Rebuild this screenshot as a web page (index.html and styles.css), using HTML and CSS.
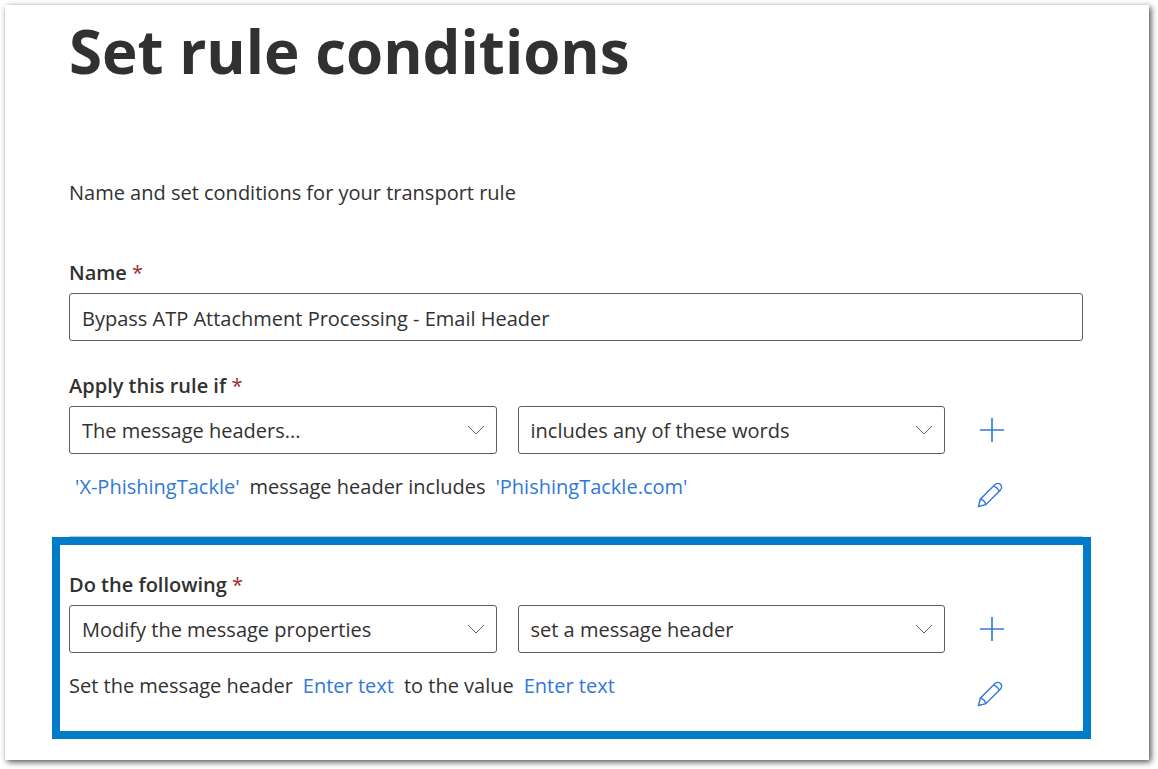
FILE: index.html
```html
<!DOCTYPE html>
<html lang="en">
<head>
    <meta charset="UTF-8">
    <meta name="viewport" content="width=device-width, initial-scale=1.0">
    <title>Set rule conditions</title>
    <link rel="stylesheet" href="styles.css">
</head>
<body>
<main class="panel">
    <form>
        <section class="section">
            <h1>Set rule conditions</h1>
            <p class="intro">Name and set conditions for your transport rule</p>

            <label class="label" for="name">Name <span class="required">*</span></label>
            <input class="field" type="text" id="name" value="Bypass ATP Attachment Processing - Email Header">
        </section>

        <section class="section condition">
            <label class="label" for="condition">Apply this rule if <span class="required">*</span></label>
            <div class="row">
                <div class="select">
                    <select class="field" id="condition">
                        <option>The message headers...</option>
                    </select>
                    <svg class="chevron" width="18" height="10" viewBox="0 0 18 10"><path d="M1 1l8 8 8-8"/></svg>
                </div>
                <div class="select">
                    <select class="field" aria-label="Condition match">
                        <option>includes any of these words</option>
                    </select>
                    <svg class="chevron" width="18" height="10" viewBox="0 0 18 10"><path d="M1 1l8 8 8-8"/></svg>
                </div>
                <button class="icon" type="button" aria-label="Add condition">
                    <svg width="26" height="26" viewBox="0 0 26 26"><path d="M13 1v24M1 13h24"/></svg>
                </button>
            </div>
            <div class="summary">
                <p class="text indent"><a href="#">'X-PhishingTackle'</a><span>message header includes</span><a href="#">'PhishingTackle.com'</a></p>
                <button class="icon edit" type="button" aria-label="Edit condition">
                    <svg width="26" height="26" viewBox="0 0 26 26"><path d="M1.5 24.5L3.3 17.2 18 2.5Q21 .2 23.5 2.5 25.7 5 23.5 8L8.8 22.7ZM3.3 17.2Q7.8 18 8.8 22.7M16.7 3.8Q20.5 5.5 22.2 9.3"/></svg>
                </button>
            </div>
        </section>

        <hr>

        <section class="section highlight">
            <label class="label" for="action">Do the following <span class="required">*</span></label>
            <div class="row">
                <div class="select">
                    <select class="field" id="action">
                        <option>Modify the message properties</option>
                    </select>
                    <svg class="chevron" width="18" height="10" viewBox="0 0 18 10"><path d="M1 1l8 8 8-8"/></svg>
                </div>
                <div class="select">
                    <select class="field" aria-label="Action detail">
                        <option>set a message header</option>
                    </select>
                    <svg class="chevron" width="18" height="10" viewBox="0 0 18 10"><path d="M1 1l8 8 8-8"/></svg>
                </div>
                <button class="icon" type="button" aria-label="Add action">
                    <svg width="26" height="26" viewBox="0 0 26 26"><path d="M13 1v24M1 13h24"/></svg>
                </button>
            </div>
            <div class="summary">
                <p class="text"><span>Set the message header</span><a href="#">Enter text</a><span>to the value</span><a href="#">Enter text</a></p>
                <button class="icon edit" type="button" aria-label="Edit action">
                    <svg width="26" height="26" viewBox="0 0 26 26"><path d="M1.5 24.5L3.3 17.2 18 2.5Q21 .2 23.5 2.5 25.7 5 23.5 8L8.8 22.7ZM3.3 17.2Q7.8 18 8.8 22.7M16.7 3.8Q20.5 5.5 22.2 9.3"/></svg>
                </button>
            </div>
        </section>
    </form>
</main>
</body>
</html>
```
FILE: styles.css
```css
* {
    box-sizing: border-box;
}

body {
    margin: 0;
    background: #fff;
    color: #323130;
    font-family: "Open Sans", "Noto Sans", sans-serif;
    font-size: 20px;
    line-height: 28px;
}

.panel {
    margin: 5px 9px 9px 5px;
    padding: 14px 58px 21px 47px;
    background: #fff;
    box-shadow: 2px 2px 6px rgba(0, 0, 0, 0.7);
}

.section {
    padding: 0 8px 0 17px;
}

h1 {
    margin: 0;
    font-size: 60px;
    font-weight: 700;
    line-height: 64px;
}

.intro {
    margin: 96px 0 52px;
}

.label {
    display: block;
    margin-bottom: 6px;
    font-weight: 600;
}

.required {
    color: #a4262c;
    font-weight: 400;
}

.field {
    display: block;
    width: 100%;
    height: 48px;
    padding: 2px 12px 0;
    border: 1px solid #605e5c;
    border-radius: 3px;
    background: #fff;
    color: #323130;
    font: inherit;
    appearance: none;
}

.condition {
    padding-top: 31px;
    padding-bottom: 28px;
}

.row {
    display: grid;
    grid-template-columns: 1fr 1fr 117px;
    gap: 21px;
    align-items: center;
}

.select {
    position: relative;
}

.chevron {
    position: absolute;
    top: 19px;
    right: 12px;
    fill: none;
    stroke: #605e5c;
    pointer-events: none;
}

.icon {
    width: 26px;
    height: 26px;
    margin-left: 13px;
    padding: 0;
    border: 0;
    background: none;
    cursor: pointer;
}

.icon svg {
    display: block;
    fill: none;
    stroke: #3079d8;
    stroke-width: 1.6;
}

.edit svg {
    stroke-width: 1.4;
}

.summary {
    display: grid;
    grid-template-columns: 1fr 117px;
    column-gap: 21px;
    align-items: end;
    padding-top: 19px;
}

.summary .icon {
    margin-left: 11px;
}

.text {
    display: flex;
    gap: 10px;
    margin: 0 0 7px;
}

.indent {
    padding-left: 6px;
}

a {
    color: #3079d8;
    text-decoration: none;
}

hr {
    margin: 0 8px 0 17px;
    border: 0;
    border-top: 1px solid #c8c6c4;
}

.highlight {
    padding: 26px 0 24px 9px;
    border: 8px solid #007cc8;
}
```
